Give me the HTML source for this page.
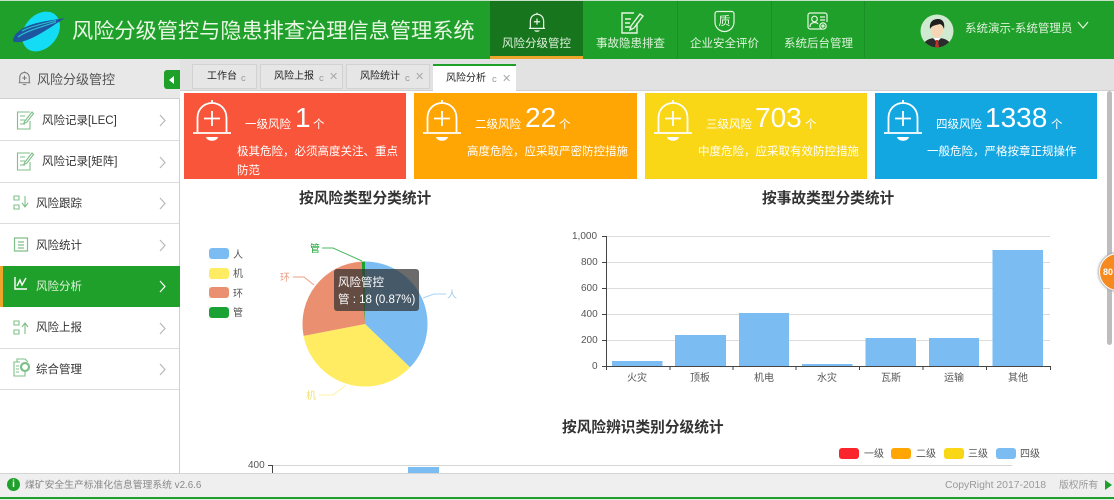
<!DOCTYPE html>
<html lang="zh"><head><meta charset="utf-8"><title>风险分级管控</title>
<style>
html,body{margin:0;padding:0;width:1114px;height:500px;overflow:hidden;background:#fff}
body{position:relative;font-family:"Liberation Sans","Noto Sans CJK SC",sans-serif;color:#333}
.a{position:absolute}
.t{position:absolute;white-space:nowrap;line-height:16px}
.nav{color:#dff3dc;font-size:11.5px;top:36px}
.side{font-size:11.5px;color:#333}
.tab{position:absolute;top:64px;height:23px;background:#e6e6e6;border:1px solid #d2d2d2;border-bottom:1px solid #d2d2d2}
.tabt{font-size:10px;color:#222;top:69px}
.g{font-size:9.5px;color:#999;top:71px}
.x{font-size:11px;color:#aaa;top:69px}
.card{position:absolute;top:93px;height:86px}
.w{color:#fff}
.lv{font-size:11.5px;top:117px;color:#fff}
.num{font-size:28px;top:110px;line-height:16px;color:#fff;font-weight:400}
.ge{font-size:11.5px;top:117px;color:#fff}
.desc{font-size:11.5px;top:143px;color:#fff;line-height:19px}
.title{font-size:14.7px;font-weight:bold;color:#333}
.ax{font-size:10px;color:#555}
.lg{font-size:10px;color:#555}
.sw{position:absolute;border-radius:3px}
</style></head><body>

<!-- header -->
<div class="a" style="left:0;top:0;width:1114px;height:59px;background:#1fa02a;border-top:1px solid #c8dfc8;box-sizing:border-box"></div>
<div class="a" style="left:490px;top:1px;width:93px;height:55px;background:#17751e"></div>
<div class="a" style="left:490px;top:56px;width:93px;height:3px;background:#eda52c"></div>
<div class="a" style="left:677px;top:1px;width:1px;height:57px;background:#1b8f25"></div>
<div class="a" style="left:771px;top:1px;width:1px;height:57px;background:#1b8f25"></div>
<div class="a" style="left:864px;top:1px;width:1px;height:57px;background:#1b8f25"></div>

<svg class="a" style="left:0;top:0" width="80" height="60" viewBox="0 0 80 60" fill="none">
<ellipse cx="41" cy="31.500" rx="22" ry="16.500" transform="rotate(-50 41 31.500)" fill="#14dcf4"/>
<path d="M13 41C13 34 22 27 35 23.500C45 21 56 19.500 65 18C57 23 47 30 37 35.500C27 41 16 44 13 41Z" fill="#1d55a0"/>
<path d="M18 37C26 31 40 27.500 56 22M22 31C30 26.500 42 24 56 20.500" stroke="#2bc0cf" stroke-width="1.100"/>
</svg>
<div class="t" style="left:72px;top:24px;font-size:21.2px;line-height:16px;color:#e9f7e4">风险分级管控与隐患排查治理信息管理系统</div>

<!-- nav icons -->
<svg class="a" style="left:528px;top:11px" width="18" height="23" viewBox="0 0 38 43" fill="none" stroke="#e6f6e2" stroke-width="2.6">
<path d="M5 33V19C5 10 11 4 19 4C27 4 33 10 33 19V33M19 4V1M2 34H36M19 13V26M12.500 20H25.500"/><path d="M13 38H25C24 42 14 42 13 38Z" fill="#e6f6e2" stroke="none"/></svg>
<svg class="a" style="left:620px;top:11px" width="24" height="24" viewBox="0 0 24 24" fill="none" stroke="#e6f6e2" stroke-width="1.4">
<path d="M14 2H2V22H17V12M5 8H11M5 12H10M5 16H10"/><path d="M11 15L20 3L23 5L14 17L10 19Z" /></svg>
<svg class="a" style="left:714px;top:10px" width="21" height="23" viewBox="0 0 21 23" fill="none" stroke="#e6f6e2" stroke-width="1.2">
<path d="M3 1.500H18C19 1.500 20 2.500 20 3.500V12C20 18 15 21.500 10.500 21.500C6 21.500 1 18 1 12V3.500C1 2.500 2 1.500 3 1.500Z"/>
<text x="10.500" y="15" text-anchor="middle" font-size="12" fill="#e6f6e2" stroke="none">质</text></svg>
<svg class="a" style="left:807px;top:12px" width="21" height="19" viewBox="0 0 21 19" fill="none" stroke="#e6f6e2" stroke-width="1.2">
<path d="M15 17H3C2 17 1 16 1 15V3C1 2 2 1 3 1H18C19 1 20 2 20 3V10"/><circle cx="7.500" cy="7" r="2.800"/><path d="M3 15C3 12 5 10.500 7.500 10.500C9 10.500 10.500 11 11 12M13 5H18M13 8H18"/><circle cx="16" cy="14" r="3.200"/><circle cx="16" cy="14" r="1"/></svg>
<div class="t nav" style="left:502px">风险分级管控</div>
<div class="t nav" style="left:596px">事故隐患排查</div>
<div class="t nav" style="left:690px">企业安全评价</div>
<div class="t nav" style="left:784px">系统后台管理</div>

<!-- avatar -->
<svg class="a" style="left:920px;top:14px" width="34" height="34" viewBox="0 0 34 34">
<defs><clipPath id="c"><ellipse cx="17" cy="17" rx="16.500" ry="16.500"/></clipPath></defs>
<g clip-path="url(#c)"><rect width="34" height="34" fill="#cfead0"/>
<path d="M3 34C3 26 10 24 17 24C24 24 31 26 31 34Z" fill="#2b2b2b"/>
<path d="M13 24L17 28L21 24Z" fill="#fff"/><path d="M16 26H18L19 34H15Z" fill="#c2342b"/>
<ellipse cx="17" cy="16" rx="6" ry="8" fill="#f6d7b5"/>
<path d="M10 15C9 7 14 5 18 5C23 5 25 9 24 15C23 12 22 11 20 10C17 11 12 11 10 15Z" fill="#1f1f1f"/></g></svg>
<div class="t" style="left:965px;top:21px;font-size:11.5px;color:#dff3dc">系统演示-系统管理员</div>
<svg class="a" style="left:1077px;top:21px" width="12" height="9" fill="none" stroke="#e6f6e2" stroke-width="1.2"><path d="M1 1L6 7L11 1"/></svg>

<!-- tab strip -->
<div class="a" style="left:0;top:59px;width:1114px;height:31px;background:#e2e2e2;border-bottom:1px solid #d0d0d0;box-sizing:content-box"></div>
<div class="tab" style="left:192px;width:63px"></div>
<div class="tab" style="left:260px;width:81px"></div>
<div class="tab" style="left:346px;width:82px"></div>
<div class="a" style="left:433px;top:64px;width:83px;height:27px;background:#fff;border-top:2px solid #1fa02a;box-sizing:border-box"></div>
<div class="t tabt" style="left:207px">工作台</div><div class="t g" style="left:241px">c</div>
<div class="t tabt" style="left:274px">风险上报</div><div class="t g" style="left:319px">c</div><div class="t x" style="left:329px">✕</div>
<div class="t tabt" style="left:360px">风险统计</div><div class="t g" style="left:405px">c</div><div class="t x" style="left:415px">✕</div>
<div class="t tabt" style="left:446px;top:71px">风险分析</div><div class="t g" style="left:492px;top:72px">c</div><div class="t x" style="left:502px;top:71px">✕</div>

<!-- sidebar -->
<div class="a" style="left:0;top:59px;width:180px;height:414px;background:#fff;border-right:1px solid #cfcfcf;box-sizing:border-box"></div>
<div class="a" style="left:0;top:59px;width:180px;height:40px;background:#e8e8e8;border-bottom:1px solid #d0d0d0;box-sizing:border-box"></div>
<svg class="a" style="left:18px;top:70px" width="13" height="17" viewBox="0 0 38 43" fill="none" stroke="#777" stroke-width="3">
<path d="M5 33V19C5 10 11 4 19 4C27 4 33 10 33 19V33M19 4V1M2 34H36M19 13V26M12.500 20H25.500"/><path d="M13 38H25C24 42 14 42 13 38Z" fill="#777" stroke="none"/></svg>
<div class="t" style="left:37px;top:72px;font-size:13px;color:#555">风险分级管控</div>
<div class="a" style="left:164px;top:70px;width:16px;height:19px;background:#1fa02a;border-radius:3px 0 0 3px"></div>
<div class="a" style="left:169px;top:76px;width:0;height:0;border:4px solid transparent;border-right:5px solid #fff;border-left:0"></div>

<div class="a" style="left:0;top:140px;width:179px;height:1px;background:#dcdcdc"></div>
<div class="a" style="left:0;top:182px;width:179px;height:1px;background:#dcdcdc"></div>
<div class="a" style="left:0;top:223px;width:179px;height:1px;background:#dcdcdc"></div>
<div class="a" style="left:0;top:348px;width:179px;height:1px;background:#dcdcdc"></div>
<div class="a" style="left:0;top:389px;width:179px;height:1px;background:#dcdcdc"></div>
<div class="a" style="left:0;top:266px;width:180px;height:41px;background:#1fa02a"></div>
<div class="a" style="left:0;top:266px;width:3px;height:41px;background:#eda52c"></div>

<svg class="a" style="left:0;top:99px" width="180" height="291" fill="none" stroke="#7fbf88" stroke-width="1.1">
<g><path d="M30 13H17.500V30H30V22M20 17H25M20 21H25M20 25H25"/><path d="M25 22L32 13L33.500 14.500L26.500 23.500L24 24Z"/></g>
<g transform="translate(0,41)"><path d="M30 13H17.500V30H30V22M20 17H25M20 21H25M20 25H25"/><path d="M25 22L32 13L33.500 14.500L26.500 23.500L24 24Z"/></g>
<path d="M14 97H19V101H14ZM14 106H19V110H14ZM25 97V107M22 104L25 108L28 104"/>
<path d="M14.500 139H27.500V152H14.500ZM18 143H24M18 146H24M18 149H24" stroke-width="1.2"/>
<path d="M14 222H19V226H14ZM14 231H19V235H14ZM25 225V235M22 228L25 224L28 228"/>
<path d="M20 263H14V277H25V273M16 267H19M16 270H19M16 273H19M17 263V260H25L28 263"/><circle cx="25" cy="268" r="4" stroke-width="2.200"/>
<g stroke="#b5b5b5" stroke-width="1.1"><path d="M160 16L165 21.500L160 27M160 58L165 63.500L160 69M160 99L165 104.500L160 110M160 141L165 146.500L160 152M160 224L165 229.500L160 235M160 265L165 270.500L160 276"/></g>
<path d="M160 182L165 187.500L160 193" stroke="#fff" stroke-width="1.2"/>
<path d="M15 178V190H27M17 187L20 181L22 186L26 179" stroke="#fff" stroke-width="1.4"/>
</svg>
<div class="t side" style="left:42px;top:113px">风险记录[LEC]</div>
<div class="t side" style="left:42px;top:154px">风险记录[矩阵]</div>
<div class="t side" style="left:36px;top:196px">风险跟踪</div>
<div class="t side" style="left:36px;top:238px">风险统计</div>
<div class="t side" style="left:36px;top:279px;color:#dff3dc">风险分析</div>
<div class="t side" style="left:36px;top:320px">风险上报</div>
<div class="t side" style="left:36px;top:362px">综合管理</div>

<!-- cards -->
<div class="card" style="left:184px;width:222px;background:#f9553b"></div>
<div class="card" style="left:414px;width:223px;background:#ffa504"></div>
<div class="card" style="left:645px;width:222px;background:#f9d616"></div>
<div class="card" style="left:875px;width:222px;background:#13a7e2"></div>
<svg width="0" height="0" style="position:absolute"><defs><g id="bell" fill="none" stroke="#fff" stroke-width="1.8"><path d="M4.500 33V19C4.500 10 11 4 19 4C27 4 33.500 10 33.500 19V33M19 4V1M0 34H38M19 12V27M11 19.500H27"/><path d="M13 38H25C24 43 14 43 13 38Z" fill="#fff" stroke="none"/></g></defs></svg>
<svg class="a" style="left:193px;top:99px" width="38" height="44"><use href="#bell"/></svg>
<svg class="a" style="left:423px;top:99px" width="38" height="44"><use href="#bell"/></svg>
<svg class="a" style="left:654px;top:99px" width="38" height="44"><use href="#bell"/></svg>
<svg class="a" style="left:884px;top:99px" width="38" height="44"><use href="#bell"/></svg>

<div class="t lv" style="left:245px">一级风险</div><div class="t num" style="left:295px">1</div><div class="t ge" style="left:313px">个</div>
<div class="t desc" style="left:237px;width:165px;white-space:normal">极其危险，必须高度关注、重点防范</div>
<div class="t lv" style="left:475px">二级风险</div><div class="t num" style="left:525px">22</div><div class="t ge" style="left:559px">个</div>
<div class="t desc" style="left:467px">高度危险，应采取严密防控措施</div>
<div class="t lv" style="left:706px">三级风险</div><div class="t num" style="left:755px">703</div><div class="t ge" style="left:805px">个</div>
<div class="t desc" style="left:698px">中度危险，应采取有效防控措施</div>
<div class="t lv" style="left:936px">四级风险</div><div class="t num" style="left:985px">1338</div><div class="t ge" style="left:1051px">个</div>
<div class="t desc" style="left:927px">一般危险，严格按章正规操作</div>

<!-- titles -->
<div class="t title" style="left:299px;top:191px">按风险类型分类统计</div>
<div class="t title" style="left:762px;top:191px">按事故类型分类统计</div>
<div class="t title" style="left:562px;top:420px">按风险辨识类别分级统计</div>

<!-- pie legend -->
<div class="sw" style="left:209px;top:248px;width:20px;height:11px;background:#7bbdf2"></div>
<div class="sw" style="left:209px;top:268px;width:20px;height:11px;background:#ffec62"></div>
<div class="sw" style="left:209px;top:287px;width:20px;height:11px;background:#ea8f70"></div>
<div class="sw" style="left:209px;top:307px;width:20px;height:11px;background:#1aa234"></div>
<div class="t lg" style="left:233px;top:248px">人</div>
<div class="t lg" style="left:233px;top:267px">机</div>
<div class="t lg" style="left:233px;top:287px">环</div>
<div class="t lg" style="left:233px;top:306px">管</div>

<!-- pie -->
<svg class="a" style="left:0;top:0" width="1114" height="500" fill="none">
<path d="M365 324V261.500A62.500 62.500 0 0 1 410 367.400Z" fill="#7bbdf2"/>
<path d="M365 324L410 367.400A62.500 62.500 0 0 1 303.600 335.900Z" fill="#ffec62"/>
<path d="M365 324L303.600 335.900A62.500 62.500 0 0 1 361.600 261.600Z" fill="#ea8f70"/>
<path d="M365 324L361.600 261.600A62.500 62.500 0 0 1 365 261.500Z" fill="#1aa234"/>
<path d="M423 298L434 294H446" stroke="#a9d3f5"/>
<path d="M346 385L333 395H319" stroke="#fff2a0"/>
<path d="M314 285L304 277H293" stroke="#ec9f85"/>
<path d="M362 261L333 248H322" stroke="#4cb860"/>
<rect x="334" y="269" width="85" height="42" rx="3" fill="#323232" fill-opacity=".72"/>

<!-- bar chart -->
<g stroke="#dcdcdc"><path d="M606 236.500H1050M606 262.500H1050M606 288.500H1050M606 314.500H1050M606 340.500H1050"/></g>
<g fill="#7bbdf2"><rect x="612" y="361" width="50.500" height="5"/><rect x="675" y="335" width="51" height="31"/><rect x="739" y="313" width="50" height="53"/><rect x="802" y="364" width="50.500" height="2"/><rect x="865.500" y="338" width="50.500" height="28"/><rect x="929" y="338" width="50" height="28"/><rect x="992.500" y="250" width="50.500" height="116"/></g>
<path d="M606.500 236V370M602 236.500H606M602 262.500H606M602 288.500H606M602 314.500H606M602 340.500H606M602 366.500H1050.500M670 366V370M733 366V370M796 366V370M859.500 366V370M923 366V370M986.500 366V370M1050.500 366V370" stroke="#444"/>

<!-- third chart -->
<path d="M272 465.500H1012" stroke="#d5d5d5"/>
<path d="M268 465.500H272.500V473" stroke="#444"/>
<rect x="408" y="467" width="31" height="6" fill="#7bbdf2"/>
</svg>
<div class="t" style="left:338px;top:275px;font-size:11.5px;color:#fff">风险管控</div>
<div class="t" style="left:338px;top:292px;font-size:11.5px;color:#fff">管 : 18 (0.87%)</div>
<div class="t lg" style="left:447px;top:288px;color:#9ccdf3">人</div>
<div class="t lg" style="left:306px;top:389px;color:#f0e27a">机</div>
<div class="t lg" style="left:280px;top:271px;color:#ec9f85">环</div>
<div class="t lg" style="left:310px;top:242px;color:#1aa234">管</div>

<div class="t ax" style="left:572px;top:229px">1,000</div>
<div class="t ax" style="left:581px;top:255px">800</div>
<div class="t ax" style="left:581px;top:281px">600</div>
<div class="t ax" style="left:581px;top:307px">400</div>
<div class="t ax" style="left:581px;top:333px">200</div>
<div class="t ax" style="left:592px;top:359px">0</div>
<div class="t ax" style="left:627px;top:371px">火灾</div>
<div class="t ax" style="left:690px;top:371px">顶板</div>
<div class="t ax" style="left:754px;top:371px">机电</div>
<div class="t ax" style="left:817px;top:371px">水灾</div>
<div class="t ax" style="left:881px;top:371px">瓦斯</div>
<div class="t ax" style="left:944px;top:371px">运输</div>
<div class="t ax" style="left:1008px;top:371px">其他</div>
<div class="t ax" style="left:248px;top:458px">400</div>

<div class="sw" style="left:839px;top:448px;width:20px;height:11px;background:#f9242c"></div>
<div class="sw" style="left:891px;top:448px;width:20px;height:11px;background:#ffa504"></div>
<div class="sw" style="left:944px;top:448px;width:20px;height:11px;background:#f9d616"></div>
<div class="sw" style="left:996px;top:448px;width:20px;height:11px;background:#7bbdf2"></div>
<div class="t lg" style="left:864px;top:447px">一级</div>
<div class="t lg" style="left:916px;top:447px">二级</div>
<div class="t lg" style="left:968px;top:447px">三级</div>
<div class="t lg" style="left:1020px;top:447px">四级</div>

<!-- scrollbar and float -->
<div class="a" style="left:1107px;top:91px;width:5px;height:254px;background:#bdbdbd;border-radius:3px"></div>
<div class="a" style="left:1099px;top:253px;width:38px;height:38px;border-radius:50%;background:#f68a1e;border:1px solid #fff;box-shadow:0 0 2px 1px #aaa;box-sizing:border-box"></div>
<div class="t" style="left:1103px;top:264px;font-size:9px;font-weight:bold;color:#fff">80</div>

<!-- footer -->
<div class="a" style="left:0;top:473px;width:1114px;height:24px;background:#efefef;border-top:1px solid #d4d4d4;box-sizing:border-box"></div>
<div class="a" style="left:0;top:497px;width:1114px;height:2px;background:#1fa02a"></div>
<div class="a" style="left:0;top:499px;width:1114px;height:1px;background:#e8e8e8"></div>
<div class="a" style="left:7px;top:478px;width:13px;height:13px;border-radius:50%;background:#1fa02a"></div>
<div class="t" style="left:7px;top:477px;width:13px;text-align:center;font-size:10px;font-weight:bold;color:#fff">i</div>
<div class="t" style="left:25px;top:478px;font-size:9.8px;color:#888">煤矿安全生产标准化信息管理系统 v2.6.6</div>
<div class="t" style="left:945px;top:478px;font-size:10.4px;color:#999">CopyRight 2017-2018</div>
<div class="t" style="left:1059px;top:478px;font-size:9.8px;color:#999">版权所有</div>
<div class="a" style="left:1105px;top:480px;width:0;height:0;border:5px solid transparent;border-left:7px solid #1fa02a;border-right:0"></div>
</body></html>
